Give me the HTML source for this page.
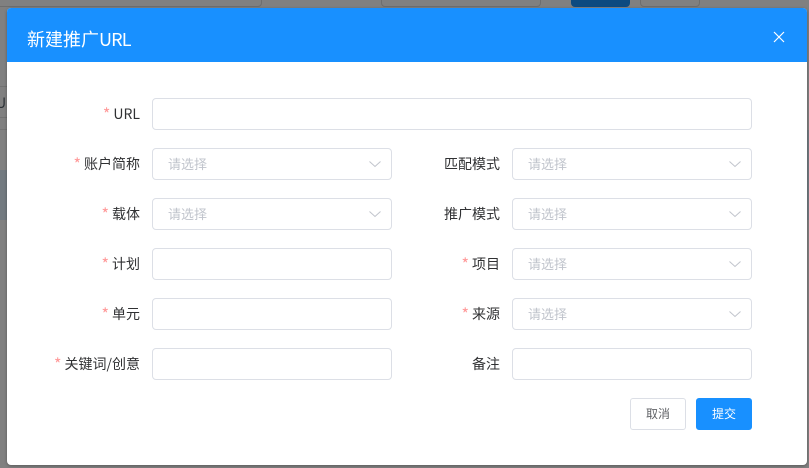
<!DOCTYPE html>
<html lang="zh">
<head>
<meta charset="utf-8">
<title>新建推广URL</title>
<style>
*{box-sizing:border-box}
html,body{margin:0;padding:0}
body{width:809px;height:468px;overflow:hidden;position:relative;background:#808080;font-family:"Noto Sans CJK SC","Liberation Sans",sans-serif;font-size:14px;color:#303133}
.bg{position:absolute}
.dialog{position:absolute;left:7px;top:8px;width:800px;height:457px;background:#fff;border-radius:4px;box-shadow:0 1px 3px rgba(0,0,0,.3);overflow:hidden}
.head{position:absolute;left:0;top:0;width:800px;height:54px;background:#1890ff}
.title{position:absolute;left:20px;top:19px;font-size:18px;line-height:24px;color:#fff}
.title span{letter-spacing:-.8px}
.close{position:absolute;left:766px;top:23px;width:12px;height:12px}
.lb{position:absolute;height:32px;line-height:32px;text-align:right;white-space:nowrap;color:#303133}
.lb i{font-style:normal;font-size:16px;line-height:0;color:#f99;margin-right:3px;position:relative;top:1px}
.ip{position:absolute;height:32px;border:1px solid #dcdfe6;border-radius:4px;background:#fff}
.ph{position:absolute;left:15px;top:0;line-height:30px;font-size:13px;color:#c0c4cc}
.ip svg{position:absolute;left:216px;top:12px;width:12px;height:6px;overflow:visible}
.btn{position:absolute;top:390px;height:32px;line-height:30px;text-align:center;border-radius:3px;font-size:12px}
</style>
</head>
<body>
<div class="bg" style="left:-4px;top:-10px;width:266px;height:17px;border:1px solid #6e6e6e;border-radius:4px"></div>
<div class="bg" style="left:381px;top:-10px;width:160px;height:17px;border:1px solid #6e6e6e;border-radius:4px"></div>
<div class="bg" style="left:571px;top:-10px;width:59px;height:17px;background:#0c4a80;border-radius:4px"></div>
<div class="bg" style="left:640px;top:-10px;width:60px;height:17px;border:1px solid #6e6e6e;border-radius:4px"></div>
<div class="bg" style="left:0;top:86px;width:7px;height:1px;background:#727272"></div>
<div class="bg" style="left:0;top:117px;width:7px;height:1px;background:#727272"></div>
<div class="bg" style="left:0;top:129px;width:7px;height:1px;background:#747474"></div>
<div class="bg" style="left:0;top:170px;width:7px;height:50px;background:#727a80"></div>
<div class="bg" style="left:-4px;top:93px;font-size:14px;line-height:20px;color:#2c3136">U</div>
<div class="bg" style="left:807px;top:130px;width:2px;height:90px;background:#727a80"></div>

<div class="dialog">
  <div class="head">
    <div class="title">新建推广<span>URL</span></div>
    <svg class="close" viewBox="0 0 12 12"><path d="M1 1L11 11M11 1L1 11" stroke="#fff" stroke-width="1.2" fill="none"/></svg>
  </div>

  <div class="lb" style="right:667px;top:90px"><i>*</i>URL</div>
  <div class="ip" style="left:145px;top:90px;width:600px"></div>

  <div class="lb" style="right:667px;top:140px"><i>*</i>账户简称</div>
  <div class="ip" style="left:145px;top:140px;width:240px"><span class="ph">请选择</span><svg viewBox="0 0 12 6"><path d="M.5 .5L6 5.5L11.5 .5" stroke="#c0c4cc" fill="none"/></svg></div>
  <div class="lb" style="right:307px;top:140px">匹配模式</div>
  <div class="ip" style="left:505px;top:140px;width:240px"><span class="ph">请选择</span><svg viewBox="0 0 12 6"><path d="M.5 .5L6 5.5L11.5 .5" stroke="#c0c4cc" fill="none"/></svg></div>

  <div class="lb" style="right:667px;top:190px"><i>*</i>载体</div>
  <div class="ip" style="left:145px;top:190px;width:240px"><span class="ph">请选择</span><svg viewBox="0 0 12 6"><path d="M.5 .5L6 5.5L11.5 .5" stroke="#c0c4cc" fill="none"/></svg></div>
  <div class="lb" style="right:307px;top:190px">推广模式</div>
  <div class="ip" style="left:505px;top:190px;width:240px"><span class="ph">请选择</span><svg viewBox="0 0 12 6"><path d="M.5 .5L6 5.5L11.5 .5" stroke="#c0c4cc" fill="none"/></svg></div>

  <div class="lb" style="right:667px;top:240px"><i>*</i>计划</div>
  <div class="ip" style="left:145px;top:240px;width:240px"></div>
  <div class="lb" style="right:307px;top:240px"><i>*</i>项目</div>
  <div class="ip" style="left:505px;top:240px;width:240px"><span class="ph">请选择</span><svg viewBox="0 0 12 6"><path d="M.5 .5L6 5.5L11.5 .5" stroke="#c0c4cc" fill="none"/></svg></div>

  <div class="lb" style="right:667px;top:290px"><i>*</i>单元</div>
  <div class="ip" style="left:145px;top:290px;width:240px"></div>
  <div class="lb" style="right:307px;top:290px"><i>*</i>来源</div>
  <div class="ip" style="left:505px;top:290px;width:240px"><span class="ph">请选择</span><svg viewBox="0 0 12 6"><path d="M.5 .5L6 5.5L11.5 .5" stroke="#c0c4cc" fill="none"/></svg></div>

  <div class="lb" style="right:667px;top:340px"><i>*</i>关键词/创意</div>
  <div class="ip" style="left:145px;top:340px;width:240px"></div>
  <div class="lb" style="right:307px;top:340px">备注</div>
  <div class="ip" style="left:505px;top:340px;width:240px"></div>

  <div class="btn" style="left:623px;width:56px;border:1px solid #dcdfe6;background:#fff;color:#606266">取消</div>
  <div class="btn" style="left:689px;width:56px;border:1px solid #1890ff;background:#1890ff;color:#fff">提交</div>
</div>
</body>
</html>
